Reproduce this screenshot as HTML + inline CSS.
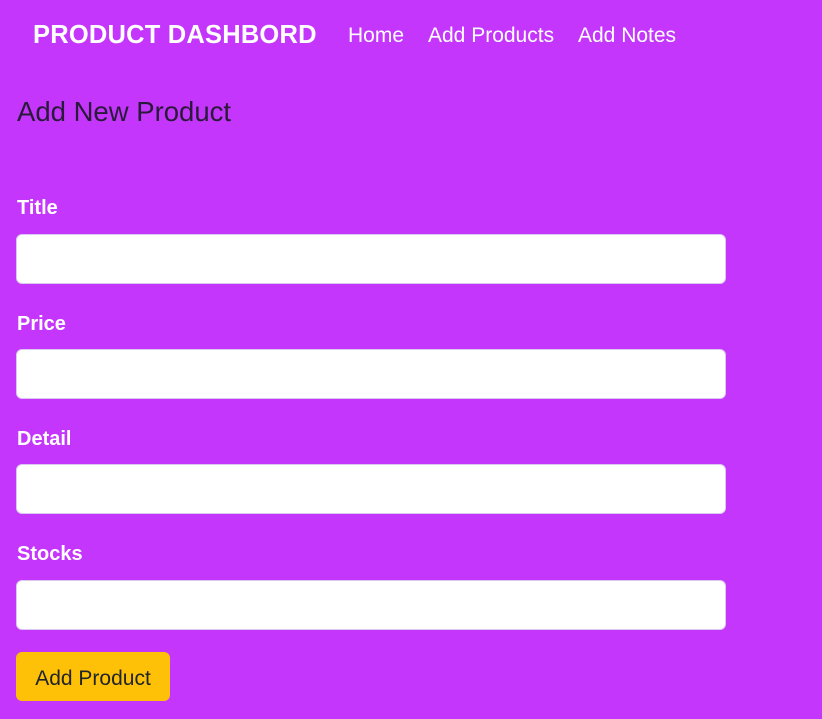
<!DOCTYPE html>
<html><head><style>
html,body{margin:0;padding:0;}
body{width:822px;height:719px;background:#c436fc;font-family:"Liberation Sans",sans-serif;position:relative;overflow:hidden;}
.a{position:absolute;white-space:nowrap;}
.brand{left:33px;top:21px;font-size:25.5px;font-weight:bold;color:#fff;letter-spacing:0.2px;}
.nav{top:24px;font-size:21px;color:#fff;}
h2{position:absolute;left:17px;top:96px;margin:0;font-size:27.5px;font-weight:normal;color:#2a1a3a;}
.lbl{left:17px;font-size:20px;font-weight:bold;color:#fff;}
.inp{position:absolute;left:16px;width:708px;height:48px;background:#fff;border:1px solid #dcc8ee;border-radius:6px;}
.btn{position:absolute;left:16px;top:652px;width:154px;height:49px;background:#ffc107;border-radius:6px;font-size:21px;color:#212529;text-align:center;line-height:53px;}
</style></head><body>
<div class="a brand">PRODUCT DASHBORD</div>
<div class="a nav" style="left:348px">Home</div>
<div class="a nav" style="left:428px">Add Products</div>
<div class="a nav" style="left:578px">Add Notes</div>
<h2>Add New Product</h2>
<div class="a lbl" style="top:197px">Title</div>
<div class="inp" style="top:234px"></div>
<div class="a lbl" style="top:313px">Price</div>
<div class="inp" style="top:349px"></div>
<div class="a lbl" style="top:428px">Detail</div>
<div class="inp" style="top:464px"></div>
<div class="a lbl" style="top:543px">Stocks</div>
<div class="inp" style="top:580px"></div>
<div class="btn">Add Product</div>
</body></html>
